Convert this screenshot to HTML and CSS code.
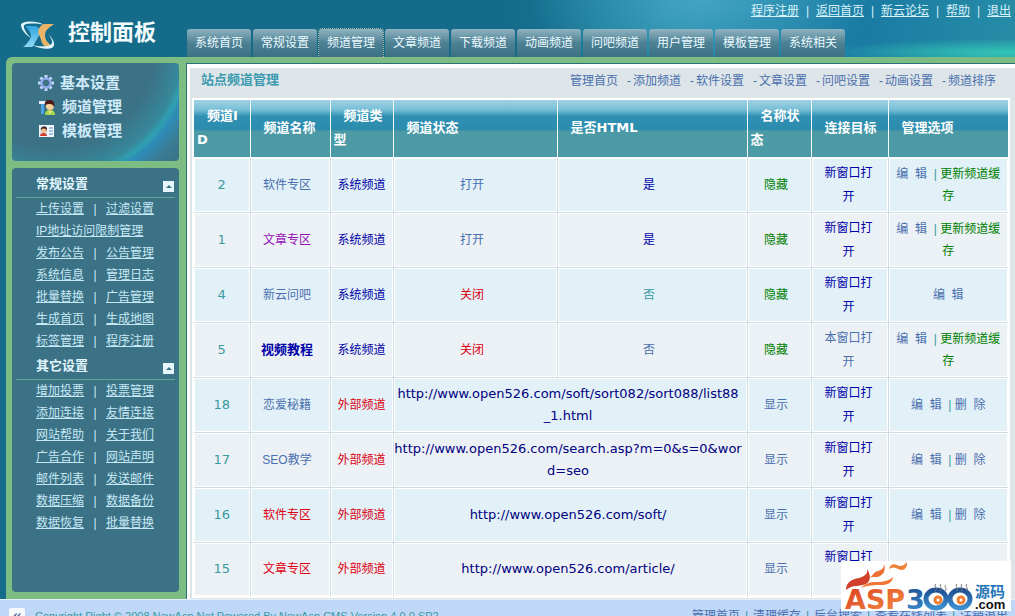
FILE: index.html
```html
<!DOCTYPE html>
<html lang="zh-CN">

<head>
  <meta charset="UTF-8">
  <meta name="viewport" content="width=device-width, initial-scale=1.0">
  <title>控制面板</title>
  <link rel="stylesheet" href="styles.css">
</head>

<body>
  <!-- Header -->
  <header class="header">
    <div class="logo">
      <svg width="36" height="28" viewBox="0 0 36 28">
        <defs>
          <linearGradient id="logo-blue" x2="0" y2="1">
            <stop offset="0" stop-color="#2fa4e0" />
            <stop offset="1" stop-color="#8fd8f2" />
          </linearGradient>
        </defs>
        <path d="M5 5h10c3 0 4 3 6 6l-4 7c-2 3-3 7-5 8H3c3-2 6-6 8-10 0-4-2-8-6-11z" fill="url(#logo-blue)" />
        <path d="M34 3H24c-5 2-7 7-5 11 3 5 2 9 6 11h7c-4-3-7-6-7-11 0-5 5-8 9-11z" fill="#e9b368" />
        <path d="M24 4C16-1 1 0 1 4c0 7 10 13 10 13S3 9 4 5c0-3 12-3 20-1zM12 24c8 4 21 6 22 0 1-5-6-11-6-11s5 6 4 9c-1 4-12 4-20 2z" fill="#dff4fb" />
      </svg>
      <span>控制面板</span>
    </div>
    <div class="header-main">
      <div class="top-links">
        <a href="#">程序注册</a><i>|</i><a href="#">返回首页</a><i>|</i><a href="#">新云论坛</a><i>|</i><a href="#">帮助</a><i>|</i><a href="#">退出</a>
      </div>
      <nav class="tabs">
        <a href="#">系统首页</a>
        <a href="#">常规设置</a>
        <a href="#" class="current">频道管理</a>
        <a href="#">文章频道</a>
        <a href="#">下载频道</a>
        <a href="#">动画频道</a>
        <a href="#">问吧频道</a>
        <a href="#">用户管理</a>
        <a href="#">模板管理</a>
        <a href="#">系统相关</a>
      </nav>
    </div>
  </header>

  <div class="main">
    <!-- Sidebar -->
    <aside class="sidebar">
      <div class="panel shortcuts">
        <a href="#">
          <svg width="16" height="16" viewBox="0 0 16 16">
            <g stroke="#c3d8fb" stroke-width="3">
              <path d="M8 0v16M0 8h16M2.5 2.5l11 11M13.5 2.5l-11 11" />
            </g>
            <circle cx="8" cy="8" r="4.5" fill="#3c7286" stroke="#8fa9ea" stroke-width="2.5" />
          </svg>
          基本设置
        </a>
        <a href="#">
          <svg width="18" height="16" viewBox="0 0 18 16">
            <path d="M1 2h7v3H1z" fill="#e6f3fa" />
            <path d="M3 5h3v10H3z" fill="#4aa6e6" />
            <path d="M7 16c0-4 2-5 5-5s5 1 5 5z" fill="#a5d84c" />
            <circle cx="12" cy="7" r="4" fill="#f7cf9c" />
            <path d="M7 6c-1-4 2-5 5-5s5 2 4 7c-1-2-2-3-4-3S9 5 7 6z" fill="#4b1d16" />
            <path d="M10 12h4l-2 3z" fill="#f5e08a" />
          </svg>
          频道管理
        </a>
        <a href="#">
          <svg width="18" height="16" viewBox="0 0 18 16">
            <rect x="1" y="2" width="15" height="12" fill="#f2f8fd" />
            <path d="M2 3h7v10H2z" fill="#cde6fa" />
            <circle cx="6" cy="7" r="3" fill="#f2bd8c" />
            <path d="M3 7c-1-4 6-5 6-1v2C8 5 5 5 3 7z" fill="#401c18" />
            <path d="M2 13c0-4 7-4 7 0z" fill="#d33b2c" />
            <path d="M11 5h4M11 8h4M11 11h4" stroke="#4f8fcf" />
          </svg>
          模板管理
        </a>
      </div>

      <div class="panel menus">
        <h2>常规设置 <button type="button" class="fold" aria-label="收起常规设置"></button></h2>
        <ul>
          <li><a href="#">上传设置</a><i>|</i><a href="#">过滤设置</a></li>
          <li><a href="#">IP地址访问限制管理</a></li>
          <li><a href="#">发布公告</a><i>|</i><a href="#">公告管理</a></li>
          <li><a href="#">系统信息</a><i>|</i><a href="#">管理日志</a></li>
          <li><a href="#">批量替换</a><i>|</i><a href="#">广告管理</a></li>
          <li><a href="#">生成首页</a><i>|</i><a href="#">生成地图</a></li>
          <li><a href="#">标签管理</a><i>|</i><a href="#">程序注册</a></li>
        </ul>
        <h2>其它设置 <button type="button" class="fold" aria-label="收起其它设置"></button></h2>
        <ul>
          <li><a href="#">增加投票</a><i>|</i><a href="#">投票管理</a></li>
          <li><a href="#">添加连接</a><i>|</i><a href="#">友情连接</a></li>
          <li><a href="#">网站帮助</a><i>|</i><a href="#">关于我们</a></li>
          <li><a href="#">广告合作</a><i>|</i><a href="#">网站声明</a></li>
          <li><a href="#">邮件列表</a><i>|</i><a href="#">发送邮件</a></li>
          <li><a href="#">数据压缩</a><i>|</i><a href="#">数据备份</a></li>
          <li><a href="#">数据恢复</a><i>|</i><a href="#">批量替换</a></li>
        </ul>
      </div>
    </aside>

    <!-- Channel list -->
    <main class="content">
      <div class="content-head">
        <h1>站点频道管理</h1>
        <nav class="sub-nav">
          <a href="#">管理首页</a><i>-</i><a href="#">添加频道</a><i>-</i><a href="#">软件设置</a><i>-</i><a href="#">文章设置</a><i>-</i><a href="#">问吧设置</a><i>-</i><a href="#">动画设置</a><i>-</i><a href="#">频道排序</a>
        </nav>
      </div>

      <table class="channels">
        <colgroup>
          <col class="col-id">
          <col class="col-name">
          <col class="col-type">
          <col class="col-status">
          <col class="col-html">
          <col class="col-show">
          <col class="col-target">
          <col class="col-actions">
        </colgroup>
        <thead>
          <tr>
            <th>频道ID</th>
            <th>频道名称</th>
            <th>频道类型</th>
            <th>频道状态</th>
            <th>是否HTML</th>
            <th>名称状态</th>
            <th>连接目标</th>
            <th>管理选项</th>
          </tr>
        </thead>
        <tbody>
          <tr>
            <td class="id">2</td>
            <td class="name"><a href="#">软件专区</a></td>
            <td class="navy">系统频道</td>
            <td class="status"><a href="#">打开</a></td>
            <td class="status navy">是</td>
            <td class="status green">隐藏</td>
            <td class="target navy">新窗口打开</td>
            <td class="actions"><a href="#">编&nbsp;&nbsp;辑</a>&nbsp; | <a href="#" class="green">更新频道缓存</a></td>
          </tr>
          <tr>
            <td class="id">1</td>
            <td class="name"><a href="#" class="purple">文章专区</a></td>
            <td class="navy">系统频道</td>
            <td class="status"><a href="#">打开</a></td>
            <td class="status navy">是</td>
            <td class="status green">隐藏</td>
            <td class="target navy">新窗口打开</td>
            <td class="actions"><a href="#">编&nbsp;&nbsp;辑</a>&nbsp; | <a href="#" class="green">更新频道缓存</a></td>
          </tr>
          <tr>
            <td class="id">4</td>
            <td class="name"><a href="#">新云问吧</a></td>
            <td class="navy">系统频道</td>
            <td class="status"><a href="#" class="red">关闭</a></td>
            <td class="status teal">否</td>
            <td class="status green">隐藏</td>
            <td class="target navy">新窗口打开</td>
            <td class="actions"><a href="#">编&nbsp;&nbsp;辑</a></td>
          </tr>
          <tr>
            <td class="id">5</td>
            <td class="name"><a href="#" class="navy strong">视频教程</a></td>
            <td class="navy">系统频道</td>
            <td class="status"><a href="#" class="red">关闭</a></td>
            <td class="status"><a href="#">否</a></td>
            <td class="status green">隐藏</td>
            <td class="target"><a href="#">本窗口打开</a></td>
            <td class="actions"><a href="#">编&nbsp;&nbsp;辑</a>&nbsp; | <a href="#" class="green">更新频道缓存</a></td>
          </tr>
          <tr>
            <td class="id">18</td>
            <td class="name"><a href="#">恋爱秘籍</a></td>
            <td class="red">外部频道</td>
            <td colspan="2" class="url">http://www.open526.com/soft/sort082/sort088/list88<br>_1.html</td>
            <td class="status"><a href="#">显示</a></td>
            <td class="target navy">新窗口打开</td>
            <td class="actions"><a href="#">编&nbsp;&nbsp;辑</a>&nbsp; | <a href="#">删&nbsp;&nbsp;除</a></td>
          </tr>
          <tr>
            <td class="id">17</td>
            <td class="name"><a href="#">SEO教学</a></td>
            <td class="red">外部频道</td>
            <td colspan="2" class="url">http://www.open526.com/search.asp?m=0&amp;s=0&amp;wor<br>d=seo</td>
            <td class="status"><a href="#">显示</a></td>
            <td class="target navy">新窗口打开</td>
            <td class="actions"><a href="#">编&nbsp;&nbsp;辑</a>&nbsp; | <a href="#">删&nbsp;&nbsp;除</a></td>
          </tr>
          <tr>
            <td class="id">16</td>
            <td class="name"><a href="#" class="red">软件专区</a></td>
            <td class="red">外部频道</td>
            <td colspan="2" class="url">http://www.open526.com/soft/</td>
            <td class="status"><a href="#">显示</a></td>
            <td class="target navy">新窗口打开</td>
            <td class="actions"><a href="#">编&nbsp;&nbsp;辑</a>&nbsp; | <a href="#">删&nbsp;&nbsp;除</a></td>
          </tr>
          <tr>
            <td class="id">15</td>
            <td class="name"><a href="#" class="red">文章专区</a></td>
            <td class="red">外部频道</td>
            <td colspan="2" class="url">http://www.open526.com/article/</td>
            <td class="status"><a href="#">显示</a></td>
            <td class="target navy">新窗口打开</td>
            <td class="actions"><a href="#">编&nbsp;&nbsp;辑</a>&nbsp; | <a href="#">删&nbsp;&nbsp;除</a></td>
          </tr>
        </tbody>
      </table>
    </main>
  </div>

  <!-- Footer -->
  <footer class="footer">
    <button type="button" class="collapse" aria-label="收起左栏">«</button>
    <p>Copyright Right © 2008 NewAsp.Net Powered By NewAsp CMS Version 4.0.0 SP2</p>
    <nav>
      <a href="#">管理首页</a><i>|</i><a href="#">清理缓存</a><i>|</i><a href="#">后台搜索</a><i>|</i><a href="#">查看在线列表</a><i>|</i><a href="#">注销退出</a>
    </nav>
  </footer>

  <!-- Site badge -->
  <div class="badge">
    <svg width="170" height="50" viewBox="0 0 170 50">
      <defs>
        <linearGradient id="badge-orange" x2="1" y2="1">
          <stop offset="0" stop-color="#d93a24" />
          <stop offset="1" stop-color="#f7953f" />
        </linearGradient>
        <linearGradient id="badge-blue" x2="0" y2="1">
          <stop offset="0" stop-color="#1d4f93" />
          <stop offset="1" stop-color="#3c8fd0" />
        </linearGradient>
      </defs>
      <path d="M5 29c0-8 6-11 13-12 7-2 9-5 8-9 4 6 4 12-1 15-6 3-13 0-20 6z" fill="#d0402a" />
      <path d="M28 17c4-2 4-6 9-7 4-1 6-3 6-7 2 5 0 10-4 12-3 2-7 0-11 2z" fill="#ee6f32" />
      <path d="M20 27c5-5 9-6 15-6 7 0 13-1 17-5-1 6-5 8-12 8-6 0-13 0-20 3z" fill="#ef7634" />
      <path d="M48 8c1-4 4-6 8-4 3 2 7 1 10-3 1 6-4 10-9 7-3-2-6-2-9 0z" fill="#f08238" />
      <text x="4" y="48" class="badge-asp">ASP</text>
      <text x="65" y="48" class="badge-num">3</text>
      <g fill="#fff" stroke="url(#badge-blue)" stroke-width="5">
        <ellipse cx="95" cy="38" rx="10" ry="9" />
        <ellipse cx="119" cy="38" rx="10" ry="9" />
      </g>
      <g fill="#fff" stroke="#f08030" stroke-width="3">
        <circle cx="97" cy="39" r="3" />
        <circle cx="120" cy="39" r="3" />
      </g>
      <path d="M94 30c4-3-2-4 1-7M99 30c4-3-2-4 1-7M104 30c3-3-2-4 1-6M115 30c4-3-2-4 1-7M120 30c4-3-2-4 1-7M125 30c4-3-2-4 1-7" fill="none" stroke="#777" stroke-width="1" />
      <text x="134" y="36" class="badge-cn">源码</text>
      <text x="134" y="48" class="badge-com">.com</text>
    </svg>
  </div>
</body>

</html>
```
FILE: styles.css
```css
* {
  box-sizing: border-box;
}

body {
  margin: 0;
  min-height: 100vh;
  overflow: hidden;
  background: #156b8a;
  color: #3a9a9e;
  font-family: "Liberation Sans", "Noto Sans CJK SC", sans-serif;
  font-size: 12px;
  line-height: 22px;
}

a {
  color: #4a6fae;
  text-decoration: none;
}

i {
  font-style: normal;
}

h1,
h2,
p,
ul {
  margin: 0;
  padding: 0;
}

/* Header */
.header {
  display: flex;
  background:
    radial-gradient(ellipse 190px 14px at 100% 92%, rgba(52, 205, 182, 0.9), transparent),
    radial-gradient(ellipse 170px 80px at 69% 0, rgba(84, 180, 208, 0.7), transparent),
    linear-gradient(90deg, #156b8a 50%, #1f84a4 66%, #1a7ba3 85%, #268ca6);
}

.logo {
  display: flex;
  align-items: flex-end;
  gap: 12px;
  width: 187px;
  padding: 0 0 8px 20px;
  color: #f2fbff;
  font-size: 22px;
  font-weight: bold;
  line-height: 32px;
}

.header-main {
  flex: 1;
}

.top-links {
  display: flex;
  justify-content: flex-end;
  padding-right: 4px;
  margin-bottom: 7px;
  color: #d9f2fa;
}

.top-links a {
  color: #d9f2fa;
  text-decoration: underline;
}

.top-links i {
  width: 17px;
  text-align: center;
}

.tabs {
  display: flex;
  gap: 2px;
}

.tabs a {
  width: 64px;
  border-radius: 3px 3px 0 0;
  background: linear-gradient(#8fb3c1, #4d8194 50%, #3c7083);
  color: #eafaff;
  line-height: 28px;
  text-align: center;
}

.tabs .current {
  outline: 1px dotted #b5b49a;
}

/* Main area */
.main {
  display: flex;
  margin-left: 6px;
  padding-top: 6px;
  border-radius: 6px 0 0 0;
  background: #7dbd84;
}

.sidebar {
  display: flex;
  flex-direction: column;
  gap: 7px;
  width: 180px;
  padding: 0 7px 7px 6px;
}

.panel {
  border-radius: 4px;
  background: #3c7286;
}

.shortcuts {
  padding: 8px 26px 18px;
  background: radial-gradient(circle at 40px -20px, #3c7286 105px, #36889a 130px, #2f9fb0 136px, #2e8cb8 142px, #3a7c94 156px, #3c7286 170px);
}

.shortcuts a {
  display: flex;
  align-items: center;
  gap: 6px;
  color: #cfeafa;
  font-size: 15px;
  font-weight: bold;
  line-height: 24px;
}

.menus {
  flex: 1;
  padding: 2px 4px;
}

.menus h2 {
  display: flex;
  align-items: flex-end;
  justify-content: space-between;
  height: 28px;
  padding: 0 1px 5px 20px;
  border-bottom: 1px solid #5fa79c;
  color: #e2f6ff;
  font-size: 13px;
  line-height: 16px;
}

.fold {
  display: grid;
  place-items: center;
  width: 11px;
  height: 11px;
  padding: 0;
  border: 0;
  background: #e6f6fd;
}

.fold::before {
  content: "";
  border: 3px solid transparent;
  border-top: 0;
  border-bottom-color: #3c7286;
}

.menus ul {
  padding-left: 20px;
  list-style: none;
}

.menus li {
  display: flex;
  color: #c6e8f5;
}

.menus li a {
  color: #c6e8f5;
  text-decoration: underline;
}

.menus i {
  width: 22px;
  text-align: center;
}

/* Content */
.content {
  flex: 1;
  min-width: 0;
  padding: 0 5px 1px;
  border: 1px solid #2c7078;
  border-width: 1px 0 0 1px;
  background: #dde5e8;
  box-shadow: inset 3px 4px 0 #fff;
}

.content-head {
  display: flex;
  justify-content: space-between;
  padding: 6px 14px 6px 9px;
}

.content-head h1 {
  color: #3a9ab0;
  font-size: 13px;
  line-height: 20px;
}

.sub-nav {
  display: flex;
}

.sub-nav i {
  width: 15px;
  padding-right: 2px;
  text-align: right;
  color: #4a6fae;
}

.channels {
  width: 100%;
  table-layout: fixed;
  border-collapse: collapse;
  border: 2px solid #fff;
}

.col-id {
  width: 57px;
}

.col-name {
  width: 80px;
}

.col-type {
  width: 63px;
}

.col-status {
  width: 164px;
}

.col-html {
  width: 190px;
}

.col-show {
  width: 64px;
}

.col-target {
  width: 77px;
}

.col-actions {
  width: 121px;
}

.channels thead {
  background: linear-gradient(#a4d3e4, #79bfd6 18%, #2f90b3 30%, #2b8cae 52%, #4b9aa6 56%, #4b9aa6);
}

.channels th {
  height: 58px;
  padding: 4px 3px;
  border: 1px solid #f4fafc;
  color: #fff;
  font-family: "DejaVu Sans", "Noto Sans CJK SC", sans-serif;
  font-size: 13px;
  line-height: 24px;
  text-align: left;
  text-indent: 10px;
  word-break: break-all;
}

.channels td {
  height: 55px;
  padding: 0 3px;
  border: 1px solid #ccdde3;
  background: #e2f1f8;
  box-shadow: inset 0 0 0 1px #fff;
  text-align: center;
}

.channels tr:nth-child(even) td {
  background: #ecf1f5;
}

.channels .id,
.channels .url {
  font-family: "DejaVu Sans", sans-serif;
  font-size: 13px;
}

.channels .url {
  padding: 0 4px 0 0;
  color: #000080;
  word-break: break-all;
}

.channels .name,
.channels .status {
  padding-right: 9px;
}

.channels .target {
  padding: 0 13px 0 11px;
  line-height: 24px;
}

.channels .actions {
  padding: 0 4px;
  color: #3a9a9e;
}

.strong {
  font-size: 13px;
  font-weight: bold;
}

.navy {
  color: #0000a8;
}

.green {
  color: #008000;
}

.red {
  color: #dc0010;
}

.teal {
  color: #3a9a9e;
}

.purple {
  color: #9410b8;
}

/* Footer */
.footer {
  display: flex;
  align-items: center;
  gap: 10px;
  height: 32px;
  padding: 0 7px 0 9px;
  border-top: 1px solid #e4f0fb;
  background: #bfd8f8;
}

.footer p {
  flex: 1;
  font-size: 11px;
}

.footer nav {
  display: flex;
}

.footer nav i {
  width: 13px;
  text-align: center;
}

.collapse {
  width: 16px;
  height: 16px;
  padding: 0;
  border: 0;
  border-radius: 2px;
  background: #f6faff;
  color: #2b4f80;
  font-size: 16px;
  line-height: 14px;
}

/* Badge over the bottom right corner */
.badge {
  position: fixed;
  right: 4px;
  bottom: 5px;
  height: 50px;
  background: #fff;
}

.badge-asp,
.badge-num {
  font-family: "DejaVu Sans", sans-serif;
  font-size: 27px;
  font-weight: bold;
  fill: url(#badge-orange);
}

.badge-num {
  fill: url(#badge-blue);
}

.badge-cn {
  font-family: "Noto Sans CJK SC", sans-serif;
  font-size: 15px;
  font-weight: bold;
  fill: #2674b8;
}

.badge-com {
  font-family: "Liberation Sans", sans-serif;
  font-size: 13px;
  font-weight: bold;
  fill: #111;
}
```
